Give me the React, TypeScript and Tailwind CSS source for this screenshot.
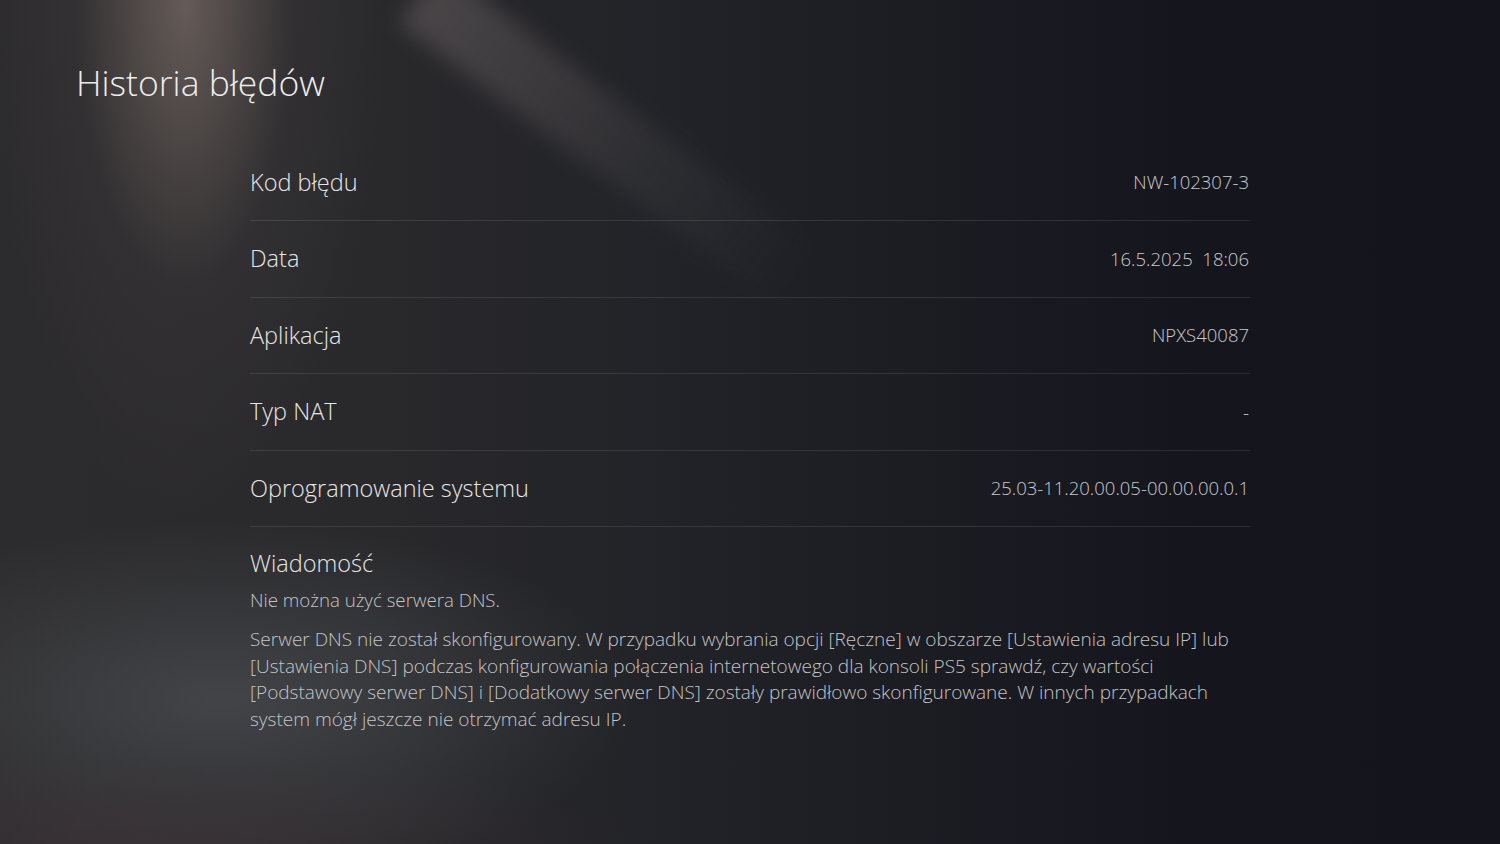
import React from "react";

const rows: [string, string][] = [
  ["Kod błędu", "NW-102307-3"],
  ["Data", "16.5.2025  18:06"],
  ["Aplikacja", "NPXS40087"],
  ["Typ NAT", "-"],
  ["Oprogramowanie systemu", "25.03-11.20.00.05-00.00.00.0.1"],
];

export default function App() {
  return (
    <div className="relative h-[844px] w-full overflow-hidden bg-[#15161d] font-['Open_Sans',sans-serif] font-light">
      {/* backdrop lighting */}
      <div className="pointer-events-none absolute inset-0 bg-[linear-gradient(90deg,#2c2b2d_0%,#29292c_25%,#1e1f25_55%,#15161d_80%,#14151c_100%)]" />
      <div className="pointer-events-none absolute inset-0 bg-[radial-gradient(ellipse_200px_520px_at_185px_0px,rgba(160,140,130,0.5),rgba(90,80,80,0.15)_55%,transparent_100%)]" />
      <div className="pointer-events-none absolute inset-0 bg-[radial-gradient(ellipse_420px_180px_at_220px_700px,rgba(95,100,105,0.45),transparent_100%)]" />
      <div className="pointer-events-none absolute inset-0 bg-[radial-gradient(ellipse_500px_90px_at_150px_844px,rgba(70,55,60,0.4),transparent_100%)]" />
      <div className="pointer-events-none absolute left-[420px] top-[-40px] h-[70px] w-[470px] origin-left rotate-[37deg] bg-[linear-gradient(90deg,rgba(130,118,118,0.38),rgba(90,88,90,0.2)_60%,transparent)] blur-[10px]" />

      <div className="relative pt-[58px]">
        <h1 className="pl-[76px] text-[35.5px] leading-[48px] text-[#ececec]">Historia błędów</h1>

        <div className="ml-[250px] mt-[38.5px] w-[1000px]">
          {rows.map(([label, value]) => (
            <div
              key={label}
              className="flex h-[76.5px] items-center justify-between border-b border-[rgba(255,255,255,0.1)]"
            >
              <span className="text-[23.5px] text-[#e6e6e6]">{label}</span>
              <span className="whitespace-pre pr-[1px] text-[18.5px] text-[#c9c9cb]">{value}</span>
            </div>
          ))}

          <div className="pt-[20px]">
            <div className="text-[23.5px] leading-[32px] text-[#e6e6e6]">Wiadomość</div>
            <p className="mt-[8px] text-[18.7px] leading-[26px] text-[#c4c4c6]">Nie można użyć serwera DNS.</p>
            <p className="mt-[13px] text-[19px] leading-[26.6px] text-[#c4c4c6]">
              Serwer DNS nie został skonfigurowany. W przypadku wybrania opcji [Ręczne] w obszarze [Ustawienia adresu IP] lub
              <br />
              [Ustawienia DNS] podczas konfigurowania połączenia internetowego dla konsoli PS5 sprawdź, czy wartości
              <br />
              [Podstawowy serwer DNS] i [Dodatkowy serwer DNS] zostały prawidłowo skonfigurowane. W innych przypadkach
              <br />
              system mógł jeszcze nie otrzymać adresu IP.
            </p>
          </div>
        </div>
      </div>
    </div>
  );
}
